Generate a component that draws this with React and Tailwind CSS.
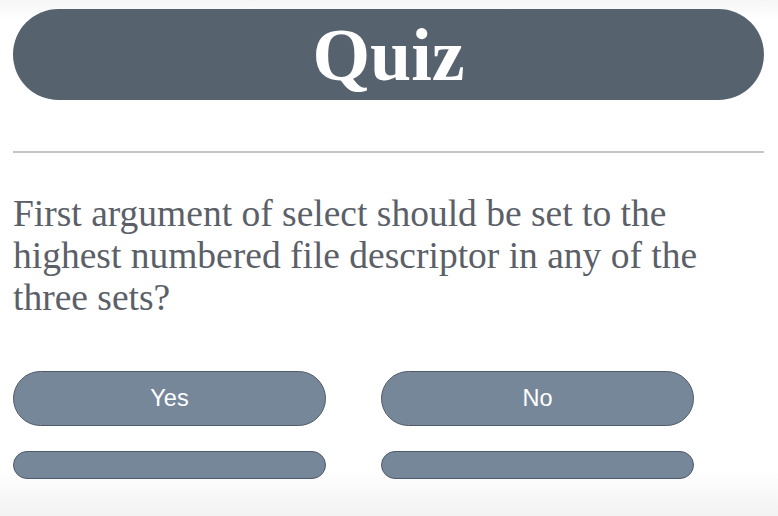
import React from 'react'

const answers = ['Yes', 'No']

export default function App() {
  return (
    <div className="h-[516px] w-[778px] overflow-hidden bg-[linear-gradient(to_bottom,#f6f6f6_0px,#ffffff_20px,#ffffff_470px,#f2f2f2_516px)] px-[13px] pt-[9px]">
      <div className="flex h-[91px] w-[751px] items-center justify-center rounded-full bg-[#56626d]">
        <h1 className="font-['Liberation_Serif',serif] text-[74px] font-bold leading-none text-white">Quiz</h1>
      </div>

      <hr className="mt-[51px] w-[751px] border-t-2 border-[#c4c4c4]" />

      <p className="mt-[40px] font-['Liberation_Serif',serif] text-[37.5px] leading-[42px] text-[#5b6068]">
        First argument of select should be set to the
        <br />
        highest numbered file descriptor in any of the
        <br />
        three sets?
      </p>

      <div className="mt-[52px] grid w-[681px] grid-cols-2 gap-x-[55px] gap-y-[25px]">
        {answers.map(a => (
          <button
            key={a}
            className="h-[55px] rounded-full border border-[#4f5a6a] bg-[#77879a] font-['Liberation_Sans',sans-serif] text-[23.5px] text-white"
          >
            {a}
          </button>
        ))}
        <button className="h-[28px] rounded-full border border-[#4f5a6a] bg-[#77879a]" />
        <button className="h-[28px] rounded-full border border-[#4f5a6a] bg-[#77879a]" />
      </div>
    </div>
  )
}
